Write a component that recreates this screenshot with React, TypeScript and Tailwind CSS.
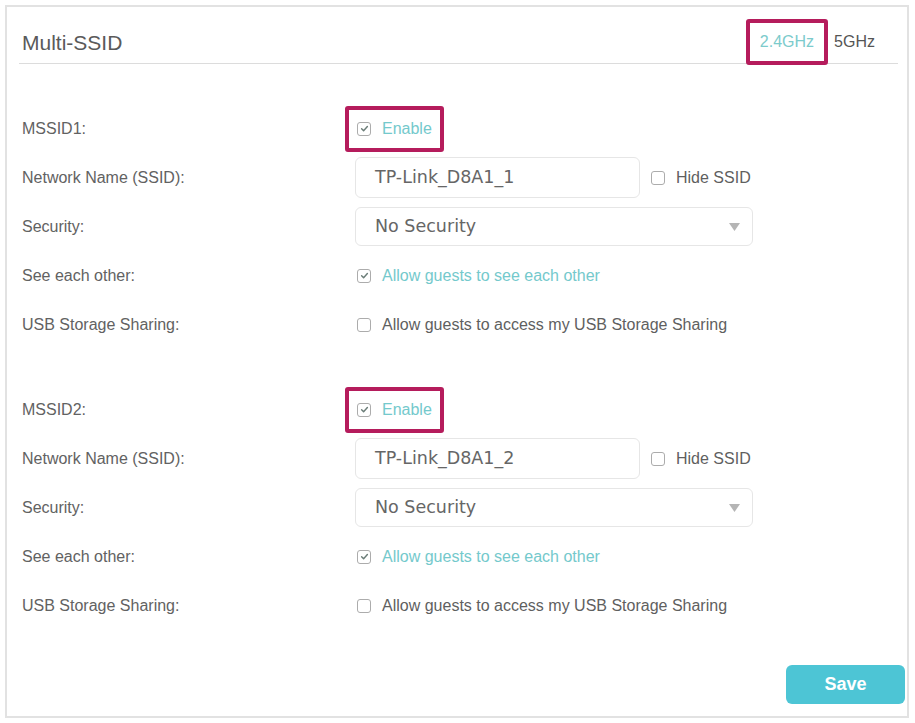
import React from 'react';

interface SsidConfig {
  label: string;
  name: string;
}

const sections: SsidConfig[] = [
  { label: 'MSSID1:', name: 'TP-Link_D8A1_1' },
  { label: 'MSSID2:', name: 'TP-Link_D8A1_2' },
];

function Checkbox({ checked = false }: { checked?: boolean }) {
  return (
    <span className="inline-flex h-[14px] w-[14px] shrink-0 items-center justify-center rounded-[3px] border border-[#acacac] bg-white">
      {checked && (
        <svg className="h-[9px] w-[9px]" viewBox="0 0 10 10" fill="none" stroke="#6b7d78" strokeWidth={1.6}>
          <path d="M1.8 5.2l2.2 2.2 4.2-4.6" strokeLinecap="round" strokeLinejoin="round" />
        </svg>
      )}
    </span>
  );
}

function Row({ label, children }: { label: string; children: React.ReactNode }) {
  return (
    <div className="flex h-[49px] items-center pl-[3px]">
      <div className="w-[333px] shrink-0 text-[16px] text-[#626262]">{label}</div>
      <div className="flex items-center">{children}</div>
    </div>
  );
}

function SsidSection({ config }: { config: SsidConfig }) {
  return (
    <div>
      <Row label={config.label}>
        <span className="-ml-[10px] inline-flex h-[46px] items-center rounded-[3px] border-[4px] border-[#b51c5c] pl-[8px] pr-[8px]">
          <Checkbox checked />
          <span className="ml-[11px] text-[16px] text-[#74c9cc]">Enable</span>
        </span>
      </Row>
      <Row label="Network Name (SSID):">
        <div className="flex h-[41px] w-[285px] items-center rounded-[6px] border border-[#e6e6e6] pl-[19px] text-[17.5px] text-[#666] [font-family:'DejaVu_Sans',sans-serif]">
          {config.name}
        </div>
        <span className="ml-[11px] flex items-center">
          <Checkbox />
          <span className="ml-[11px] text-[16px] text-[#5f5f5f]">Hide SSID</span>
        </span>
      </Row>
      <Row label="Security:">
        <div className="flex h-[39px] w-[398px] items-center justify-between rounded-[6px] border border-[#e6e6e6] pl-[19px] pr-[12px] text-[17.5px] text-[#666] [font-family:'DejaVu_Sans',sans-serif]">
          <span>No Security</span>
          <svg className="h-[8px] w-[11px]" viewBox="0 0 11 8">
            <path d="M0 0h11L5.5 8z" fill="#b5b5b5" />
          </svg>
        </div>
      </Row>
      <Row label="See each other:">
        <span className="ml-[2px] flex items-center">
          <Checkbox checked />
          <span className="ml-[11px] text-[16px] text-[#74c9cc]">Allow guests to see each other</span>
        </span>
      </Row>
      <Row label="USB Storage Sharing:">
        <span className="ml-[2px] flex items-center">
          <Checkbox />
          <span className="ml-[11px] text-[16px] text-[#5f5f5f]">Allow guests to access my USB Storage Sharing</span>
        </span>
      </Row>
    </div>
  );
}

export default function App() {
  return (
    <div className="h-[723px] w-[915px] bg-white pl-[5px] pt-[5px] [font-family:'Liberation_Sans',Arial,sans-serif]">
      <div className="flex h-[713px] w-[904px] flex-col border-2 border-[#e2e2e2] pl-[12px] pr-[9px]">
        {/* Header */}
        <div className="flex h-[57px] items-end justify-between border-b border-[#dcdcdc]">
          <div className="pb-[10px] pl-[3px] text-[21px] leading-[20px] text-[#5a5a5a]">Multi-SSID</div>
          <div className="-mb-[2px] flex items-center pr-[23px]">
            <span className="flex h-[46px] items-center rounded-[3px] border-[4px] border-[#b51c5c] bg-white px-[10px] text-[16px] text-[#7ccbcc]">
              2.4GHz
            </span>
            <span className="ml-[6px] text-[16px] text-[#555]">5GHz</span>
          </div>
        </div>

        <div className="pt-[40px]">
          <SsidSection config={sections[0]} />
        </div>
        <div className="pt-[36px]">
          <SsidSection config={sections[1]} />
        </div>

        <div className="-mr-[7px] flex justify-end pt-[35px]">
          <button className="h-[39px] w-[119px] rounded-[6px] bg-[#4dc5d5] text-[18px] font-bold text-white">
            Save
          </button>
        </div>
      </div>
    </div>
  );
}
